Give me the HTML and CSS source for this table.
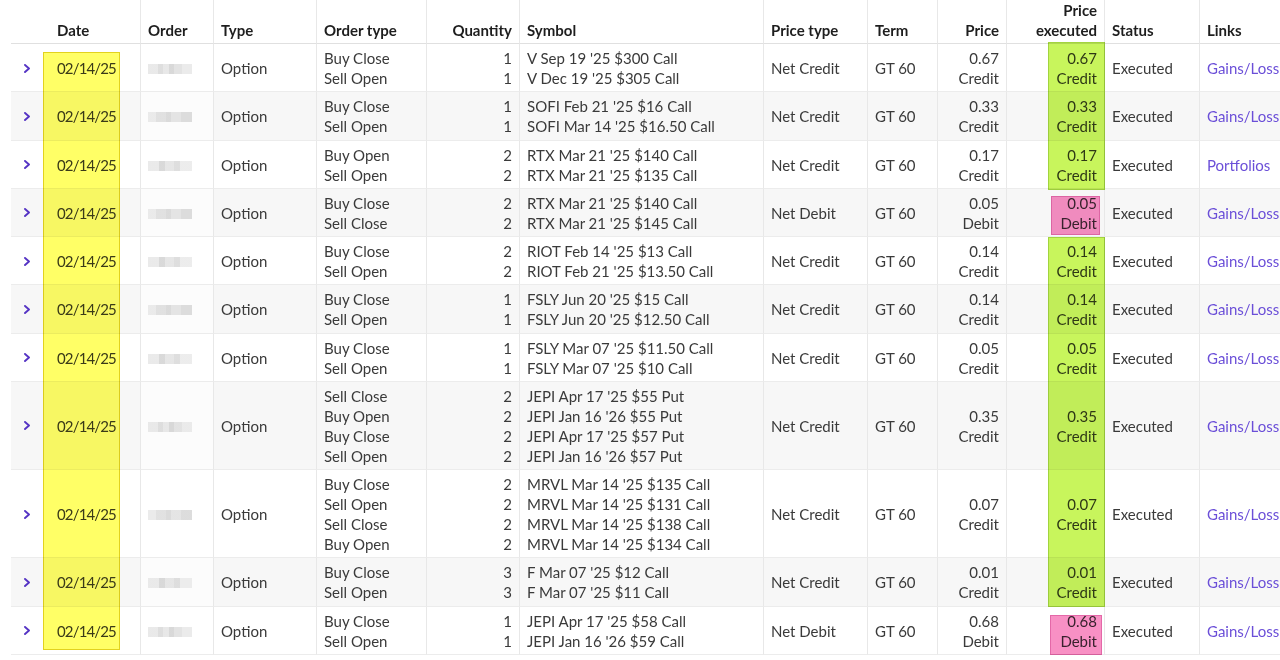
FILE: index.html
```html
<!DOCTYPE html>
<html lang="en">
<head>
<meta charset="utf-8">
<title>Orders</title>
<link rel="stylesheet" href="styles.css">
</head>
<body>
<div class="page">
<table class="orders">
<colgroup>
<col class="c-exp"><col class="c-date"><col class="c-order"><col class="c-type"><col class="c-otype"><col class="c-qty"><col class="c-sym"><col class="c-ptype"><col class="c-term"><col class="c-price"><col class="c-pexec"><col class="c-status"><col class="c-links">
</colgroup>
<thead>
<tr>
<th class="exp"></th><th class="date">Date</th><th>Order</th><th>Type</th><th>Order type</th><th class="num">Quantity</th><th>Symbol</th><th>Price type</th><th>Term</th><th class="num">Price</th><th class="num">Price<br>executed</th><th>Status</th><th>Links</th>
</tr>
</thead>
<tbody>
<tr>
<td class="exp"><svg class="chev" width="6" height="9" viewBox="0 0 6 9"><polyline points="1,1 5,4.5 1,8"/></svg></td><td class="date">02/14/25</td><td class="ord"><span class="blur b1"></span></td><td>Option</td>
<td>Buy Close<br>Sell Open</td><td class="num">1<br>1</td><td>V Sep 19 '25 $300 Call<br>V Dec 19 '25 $305 Call</td>
<td>Net Credit</td><td>GT 60</td><td class="num">0.67<br>Credit</td><td class="num">0.67<br>Credit</td><td>Executed</td><td><a href="#">Gains/Loss</a></td>
</tr>
<tr>
<td class="exp"><svg class="chev" width="6" height="9" viewBox="0 0 6 9"><polyline points="1,1 5,4.5 1,8"/></svg></td><td class="date">02/14/25</td><td class="ord"><span class="blur b2"></span></td><td>Option</td>
<td>Buy Close<br>Sell Open</td><td class="num">1<br>1</td><td>SOFI Feb 21 '25 $16 Call<br>SOFI Mar 14 '25 $16.50 Call</td>
<td>Net Credit</td><td>GT 60</td><td class="num">0.33<br>Credit</td><td class="num">0.33<br>Credit</td><td>Executed</td><td><a href="#">Gains/Loss</a></td>
</tr>
<tr>
<td class="exp"><svg class="chev" width="6" height="9" viewBox="0 0 6 9"><polyline points="1,1 5,4.5 1,8"/></svg></td><td class="date">02/14/25</td><td class="ord"><span class="blur b3"></span></td><td>Option</td>
<td>Buy Open<br>Sell Open</td><td class="num">2<br>2</td><td>RTX Mar 21 '25 $140 Call<br>RTX Mar 21 '25 $135 Call</td>
<td>Net Credit</td><td>GT 60</td><td class="num">0.17<br>Credit</td><td class="num">0.17<br>Credit</td><td>Executed</td><td><a href="#">Portfolios</a></td>
</tr>
<tr>
<td class="exp"><svg class="chev" width="6" height="9" viewBox="0 0 6 9"><polyline points="1,1 5,4.5 1,8"/></svg></td><td class="date">02/14/25</td><td class="ord"><span class="blur b2"></span></td><td>Option</td>
<td>Buy Close<br>Sell Close</td><td class="num">2<br>2</td><td>RTX Mar 21 '25 $140 Call<br>RTX Mar 21 '25 $145 Call</td>
<td>Net Debit</td><td>GT 60</td><td class="num">0.05<br>Debit</td><td class="num">0.05<br>Debit</td><td>Executed</td><td><a href="#">Gains/Loss</a></td>
</tr>
<tr>
<td class="exp"><svg class="chev" width="6" height="9" viewBox="0 0 6 9"><polyline points="1,1 5,4.5 1,8"/></svg></td><td class="date">02/14/25</td><td class="ord"><span class="blur b3"></span></td><td>Option</td>
<td>Buy Close<br>Sell Open</td><td class="num">2<br>2</td><td>RIOT Feb 14 '25 $13 Call<br>RIOT Feb 21 '25 $13.50 Call</td>
<td>Net Credit</td><td>GT 60</td><td class="num">0.14<br>Credit</td><td class="num">0.14<br>Credit</td><td>Executed</td><td><a href="#">Gains/Loss</a></td>
</tr>
<tr>
<td class="exp"><svg class="chev" width="6" height="9" viewBox="0 0 6 9"><polyline points="1,1 5,4.5 1,8"/></svg></td><td class="date">02/14/25</td><td class="ord"><span class="blur b2"></span></td><td>Option</td>
<td>Buy Close<br>Sell Open</td><td class="num">1<br>1</td><td>FSLY Jun 20 '25 $15 Call<br>FSLY Jun 20 '25 $12.50 Call</td>
<td>Net Credit</td><td>GT 60</td><td class="num">0.14<br>Credit</td><td class="num">0.14<br>Credit</td><td>Executed</td><td><a href="#">Gains/Loss</a></td>
</tr>
<tr>
<td class="exp"><svg class="chev" width="6" height="9" viewBox="0 0 6 9"><polyline points="1,1 5,4.5 1,8"/></svg></td><td class="date">02/14/25</td><td class="ord"><span class="blur b3"></span></td><td>Option</td>
<td>Buy Close<br>Sell Open</td><td class="num">1<br>1</td><td>FSLY Mar 07 '25 $11.50 Call<br>FSLY Mar 07 '25 $10 Call</td>
<td>Net Credit</td><td>GT 60</td><td class="num">0.05<br>Credit</td><td class="num">0.05<br>Credit</td><td>Executed</td><td><a href="#">Gains/Loss</a></td>
</tr>
<tr>
<td class="exp"><svg class="chev" width="6" height="9" viewBox="0 0 6 9"><polyline points="1,1 5,4.5 1,8"/></svg></td><td class="date">02/14/25</td><td class="ord"><span class="blur b1"></span></td><td>Option</td>
<td>Sell Close<br>Buy Open<br>Buy Close<br>Sell Open</td><td class="num">2<br>2<br>2<br>2</td><td>JEPI Apr 17 '25 $55 Put<br>JEPI Jan 16 '26 $55 Put<br>JEPI Apr 17 '25 $57 Put<br>JEPI Jan 16 '26 $57 Put</td>
<td>Net Credit</td><td>GT 60</td><td class="num">0.35<br>Credit</td><td class="num">0.35<br>Credit</td><td>Executed</td><td><a href="#">Gains/Loss</a></td>
</tr>
<tr>
<td class="exp"><svg class="chev" width="6" height="9" viewBox="0 0 6 9"><polyline points="1,1 5,4.5 1,8"/></svg></td><td class="date">02/14/25</td><td class="ord"><span class="blur b2"></span></td><td>Option</td>
<td>Buy Close<br>Sell Open<br>Sell Close<br>Buy Open</td><td class="num">2<br>2<br>2<br>2</td><td>MRVL Mar 14 '25 $135 Call<br>MRVL Mar 14 '25 $131 Call<br>MRVL Mar 14 '25 $138 Call<br>MRVL Mar 14 '25 $134 Call</td>
<td>Net Credit</td><td>GT 60</td><td class="num">0.07<br>Credit</td><td class="num">0.07<br>Credit</td><td>Executed</td><td><a href="#">Gains/Loss</a></td>
</tr>
<tr>
<td class="exp"><svg class="chev" width="6" height="9" viewBox="0 0 6 9"><polyline points="1,1 5,4.5 1,8"/></svg></td><td class="date">02/14/25</td><td class="ord"><span class="blur b3"></span></td><td>Option</td>
<td>Buy Close<br>Sell Open</td><td class="num">3<br>3</td><td>F Mar 07 '25 $12 Call<br>F Mar 07 '25 $11 Call</td>
<td>Net Credit</td><td>GT 60</td><td class="num">0.01<br>Credit</td><td class="num">0.01<br>Credit</td><td>Executed</td><td><a href="#">Gains/Loss</a></td>
</tr>
<tr>
<td class="exp"><svg class="chev" width="6" height="9" viewBox="0 0 6 9"><polyline points="1,1 5,4.5 1,8"/></svg></td><td class="date">02/14/25</td><td class="ord"><span class="blur b1"></span></td><td>Option</td>
<td>Buy Close<br>Sell Open</td><td class="num">1<br>1</td><td>JEPI Apr 17 '25 $58 Call<br>JEPI Jan 16 '26 $59 Call</td>
<td>Net Debit</td><td>GT 60</td><td class="num">0.68<br>Debit</td><td class="num">0.68<br>Debit</td><td>Executed</td><td><a href="#">Gains/Loss</a></td>
</tr>
</tbody>
</table>
<div class="mark mark-date"></div>
<div class="mark mark-credit mc1"></div>
<div class="mark mark-debit md1"></div>
<div class="mark mark-credit mc2"></div>
<div class="mark mark-debit md2"></div>
</div>
</body>
</html>
```
FILE: styles.css
```css
html, body {
  margin: 0;
  padding: 0;
  background: #ffffff;
  overflow: hidden;
}
.page {
  position: relative;
  width: 1280px;
  height: 660px;
  overflow: hidden;
  font-family: "Lato", "Liberation Sans", sans-serif;
  font-size: 15px;
  color: #3a3a3a;
}
.orders {
  margin-left: 11px;
  border-collapse: separate;
  border-spacing: 0;
  table-layout: fixed;
  width: 1389px;
}
.c-exp { width: 38px; }
.c-date { width: 92px; }
.c-order { width: 73px; }
.c-type { width: 103px; }
.c-otype { width: 110px; }
.c-qty { width: 93px; }
.c-sym { width: 244px; }
.c-ptype { width: 104px; }
.c-term { width: 70px; }
.c-price { width: 69px; }
.c-pexec { width: 98px; }
.c-status { width: 95px; }
.c-links { width: 200px; }

.orders th,
.orders td {
  padding: 4px 7px 3.25px 7px;
  line-height: 20px;
  text-align: left;
  white-space: nowrap;
  overflow: hidden;
  border-right: 1px solid #e8e8e8;
  border-bottom: 1px solid #ececec;
}
.orders th {
  padding-top: 0;
  padding-bottom: 3px;
  vertical-align: bottom;
  font-weight: 700;
  color: #1e1e1e;
  border-bottom: 1px solid #e0e0e0;
}
.orders td {
  vertical-align: middle;
}
.orders .exp {
  border-right: none;
  padding-left: 13px;
}
.orders .num { text-align: right; }
.orders th.date,
.orders td.date { padding-left: 8px; }
.orders td.date { letter-spacing: -0.85px; }

.orders tbody tr:nth-child(even) td { background: #f7f7f7; }
.orders tbody tr:nth-child(even) td.ord { background: #fcfcfc; }

.chev {
  display: block;
  fill: none;
  stroke: #5534c4;
  stroke-width: 1.9;
  stroke-linecap: round;
  stroke-linejoin: round;
}
a {
  color: #6b4fd8;
  text-decoration: none;
}

.blur {
  display: inline-block;
  width: 44px;
  height: 10px;
  vertical-align: middle;
  margin-top: -2px;
  opacity: 0.8;
}
.b1 { background: linear-gradient(90deg, #e4e4e4 0 22%, #d6d6d6 22% 34%, #e2e2e2 34% 48%, #cfcfcf 48% 60%, #dcdcdc 60% 78%, #e6e6e6 78% 100%); }
.b2 { background: linear-gradient(90deg, #e6e6e6 0 18%, #dadada 18% 40%, #d2d2d2 40% 52%, #dedede 52% 74%, #d4d4d4 74% 100%); }
.b3 { background: linear-gradient(90deg, #e5e5e5 0 26%, #d0d0d0 26% 38%, #e0e0e0 38% 58%, #d6d6d6 58% 72%, #e8e8e8 72% 100%); }

.mark {
  position: absolute;
  mix-blend-mode: multiply;
  box-sizing: border-box;
}
.mark-date {
  left: 43px;
  top: 52px;
  width: 77px;
  height: 598px;
  background: #ffff66;
  border: 1px solid #e2d21e;
}
.mark-credit {
  left: 1048px;
  width: 57px;
  background: #c8f55c;
  border: 1px solid #a2d43e;
}
.mc1 { top: 42px; height: 148px; }
.mc2 { top: 237px; height: 370px; }
.mark-debit {
  background: #f890c4;
  border: 1px solid #e468a8;
}
.md1 { left: 1051px; top: 196px; width: 49px; height: 39px; }
.md2 { left: 1050px; top: 615px; width: 52px; height: 40px; }
```
